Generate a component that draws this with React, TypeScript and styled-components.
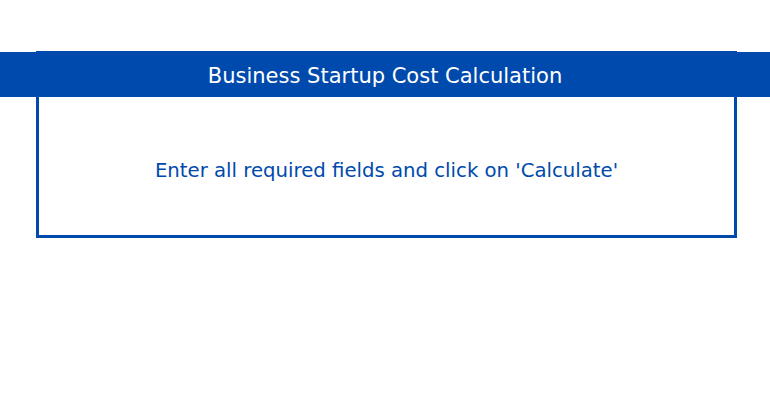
import React from "react";
import styled, { createGlobalStyle } from "styled-components";

const GlobalStyle = createGlobalStyle`
  body {
    margin: 0;
    background: #ffffff;
    font-family: "DejaVu Sans", "Liberation Sans", sans-serif;
  }
`;

const BLUE = "#004aad";

const Page = styled.div`
  padding-top: 51px;
  width: 770px;
  height: 400px;
  box-sizing: border-box;
`;

const Card = styled.section`
  margin: 0 33px 0 36px;
  height: 187px;
  box-sizing: border-box;
  border: 3px solid ${BLUE};
  display: flex;
  flex-direction: column;
`;

const Header = styled.h1`
  margin: -2px -36px 0 -39px;
  height: 45px;
  padding-top: 2px;
  box-sizing: border-box;
  background: ${BLUE};
  color: #ffffff;
  display: flex;
  align-items: center;
  justify-content: center;
  font-size: 21px;
  font-weight: 400;
`;

const Message = styled.p`
  flex: 1;
  margin: 0;
  padding-top: 8px;
  display: flex;
  align-items: center;
  justify-content: center;
  color: ${BLUE};
  font-size: 19.7px;
  font-weight: 400;
`;

export default function App() {
  return (
    <Page>
      <GlobalStyle />
      <Card>
        <Header>Business Startup Cost Calculation</Header>
        <Message>Enter all required fields and click on 'Calculate'</Message>
      </Card>
    </Page>
  );
}
